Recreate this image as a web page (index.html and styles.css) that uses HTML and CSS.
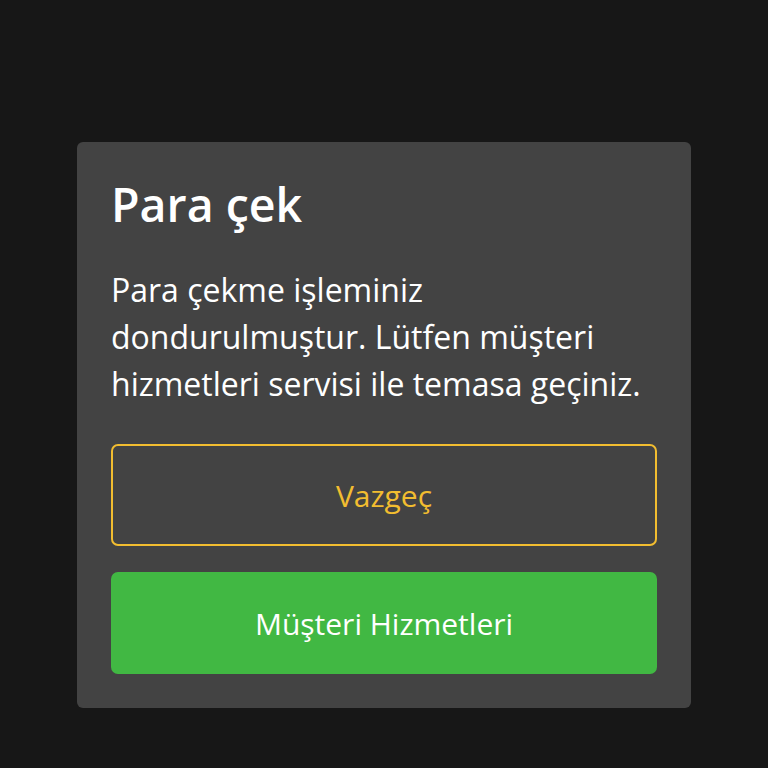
FILE: index.html
```html
<!DOCTYPE html>
<html lang="tr">
<head>
<meta charset="utf-8">
<link rel="stylesheet" href="styles.css">
</head>
<body>
<div class="modal">
  <h1 class="title">Para çek</h1>
  <p class="message">Para çekme işleminiz dondurulmuştur. Lütfen müşteri hizmetleri servisi ile temasa geçiniz.</p>
  <div class="actions">
    <button class="btn btn-outline">Vazgeç</button>
    <button class="btn btn-green">Müşteri Hizmetleri</button>
  </div>
</div>
</body>
</html>
```

FILE: styles.css
```css
html, body {
  margin: 0;
  height: 100%;
  background: #171717;
}
body {
  display: flex;
  justify-content: center;
  align-items: flex-start;
  padding-top: 142px;
  box-sizing: border-box;
  font-family: "Open Sans", "Liberation Sans", sans-serif;
}
.modal {
  width: 614px;
  box-sizing: border-box;
  background: #434343;
  border-radius: 6px;
  padding: 30px 34px 34px;
}
.title {
  margin: 0;
  color: #fff;
  font-size: 46.5px;
  font-weight: 600;
  line-height: 64px;
}
.message {
  margin: 30px 0 0;
  color: #fff;
  font-size: 32px;
  line-height: 47px;
  font-weight: 400;
}
.actions {
  margin-top: 37px;
  display: flex;
  flex-direction: column;
  gap: 26px;
}
.btn {
  height: 102px;
  border-radius: 7px;
  font-family: "Open Sans", "Liberation Sans", sans-serif;
  font-size: 30px;
  font-weight: 400;
  cursor: pointer;
}
.btn-outline {
  background: transparent;
  border: 2px solid #f2bd30;
  color: #f2bd30;
}
.btn-green {
  background: #41b843;
  border: none;
  color: #fff;
}
```
